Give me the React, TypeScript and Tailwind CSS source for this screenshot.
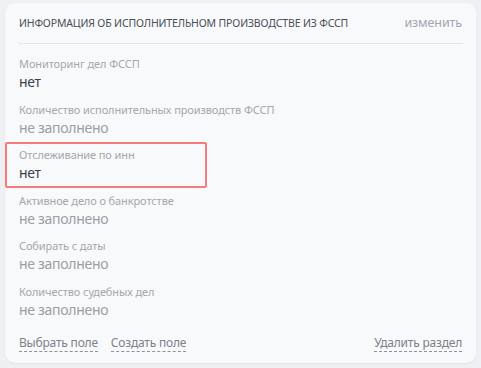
const fields = [
  { label: "Мониторинг дел ФССП", value: "нет", filled: true },
  { label: "Количество исполнительных производств ФССП", value: "не заполнено", filled: false },
  { label: "Отслеживание по инн", value: "нет", filled: true, active: true },
  { label: "Активное дело о банкротстве", value: "не заполнено", filled: false },
  { label: "Собирать с даты", value: "не заполнено", filled: false },
  { label: "Количество судебных дел", value: "не заполнено", filled: false },
];

export default function App() {
  return (
    <div
      className="min-h-screen bg-[#eef0f3] pt-[3px] px-[5px]"
      style={{ fontFamily: '"Noto Sans", "Open Sans", sans-serif' }}
    >
      <div className="h-[360px] rounded-[10px] bg-[#f8f9fb] shadow-[0_1px_2px_rgba(0,0,0,0.06)]">
        {/* Header */}
        <div className="flex items-center justify-between px-[14px] pt-[12px] pb-[12px]">
          <span className="text-[10.5px] leading-4 text-[#4a4f58] uppercase tracking-[-0.15px]">
            Информация об исполнительном производстве из ФССП
          </span>
          <span className="text-[12.5px] leading-4 text-[#a3a7ae] tracking-[-0.1px]">изменить</span>
        </div>
        <div className="mx-[13px] h-px bg-[#e3e6ea]" />

        {/* Fields */}
        <div className="flex flex-col mt-[7px]">
          {fields.map((f) => (
            <div
              key={f.label}
              className={`w-[202px] border-2 rounded-[2px] px-[12px] pt-[3px] pb-[2.6px] ${
                f.active ? "border-[#f47c7c]" : "border-transparent"
              }`}
            >
              <div className="text-[11px] leading-4 text-[#a4a8ae] whitespace-nowrap tracking-[-0.1px]">
                {f.label}
              </div>
              <div
                className={`text-[14px] leading-5 whitespace-nowrap tracking-[-0.3px] ${
                  f.filled ? "text-[#3c414b]" : "text-[#9a9ea6]"
                }`}
              >
                {f.value}
              </div>
            </div>
          ))}
        </div>

        {/* Footer */}
        <div className="flex items-center px-[14px] mt-[10px]">
          <span className="text-[12px] leading-4 tracking-[-0.2px] text-[#7c818a] border-b border-dashed border-[#8d9199]">
            Выбрать поле
          </span>
          <span className="ml-[13px] text-[12px] leading-4 tracking-[-0.2px] text-[#7c818a] border-b border-dashed border-[#8d9199]">
            Создать поле
          </span>
          <span className="ml-auto text-[12px] leading-4 tracking-[-0.2px] text-[#7c818a] border-b border-dashed border-[#8d9199]">
            Удалить раздел
          </span>
        </div>
      </div>
    </div>
  );
}
